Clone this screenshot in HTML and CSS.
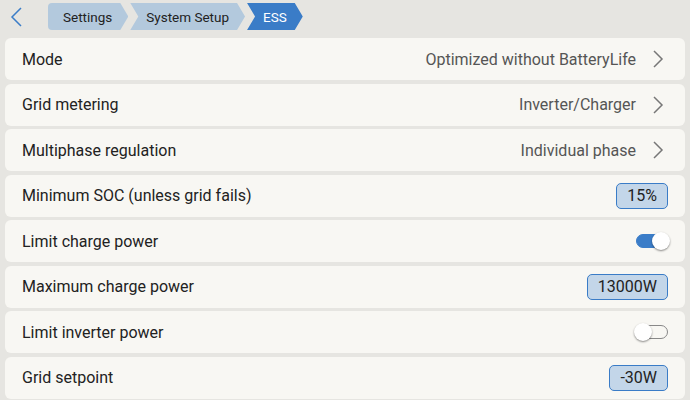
FILE: index.html
```html
<!DOCTYPE HTML>
<html lang="en">
<head>
	<title>ESS</title>
	<meta charset="utf-8">
	<meta name="viewport" content="width=device-width, initial-scale=1">
	<link rel="stylesheet" href="styles.css">
</head>
<body>
	<!-- breadcrumb bar -->
	<header class="topbar">
		<button class="back" aria-label="Back">
			<svg width="14" height="20" viewBox="0 0 14 20"><path d="M11 1 L2 10 L11 19" fill="none" stroke="#3b7dc8" stroke-width="1.5"/></svg>
		</button>
		<nav class="crumbs">
			<span class="crumb first">Settings</span>
			<span class="crumb">System Setup</span>
			<span class="crumb current">ESS</span>
		</nav>
	</header>

	<!-- settings list -->
	<main class="list">
		<div class="row">
			<span class="label">Mode</span>
			<span class="value">Optimized without BatteryLife</span>
			<svg class="chev" width="12" height="20" viewBox="0 0 12 20"><path d="M2 2 L10 10 L2 18" fill="none" stroke="#777" stroke-width="1.5"/></svg>
		</div>
		<div class="row">
			<span class="label">Grid metering</span>
			<span class="value">Inverter/Charger</span>
			<svg class="chev" width="12" height="20" viewBox="0 0 12 20"><path d="M2 2 L10 10 L2 18" fill="none" stroke="#777" stroke-width="1.5"/></svg>
		</div>
		<div class="row">
			<span class="label">Multiphase regulation</span>
			<span class="value">Individual phase</span>
			<svg class="chev" width="12" height="20" viewBox="0 0 12 20"><path d="M2 2 L10 10 L2 18" fill="none" stroke="#777" stroke-width="1.5"/></svg>
		</div>
		<div class="row">
			<span class="label">Minimum SOC (unless grid fails)</span>
			<span class="box">15%</span>
		</div>
		<div class="row">
			<span class="label">Limit charge power</span>
			<span class="switch on"><span class="knob"></span></span>
		</div>
		<div class="row">
			<span class="label">Maximum charge power</span>
			<span class="box">13000W</span>
		</div>
		<div class="row">
			<span class="label">Limit inverter power</span>
			<span class="switch"><span class="knob"></span></span>
		</div>
		<div class="row">
			<span class="label">Grid setpoint</span>
			<span class="box">-30W</span>
		</div>
	</main>
</body>
</html>
```

FILE: styles.css
```css
html, body {
	margin: 0;
	padding: 0;
}
body {
	background-color: #e6e5e1;
	font-family: Roboto, "Noto Sans", sans-serif;
	color: #222;
	width: 690px;
	height: 400px;
	overflow: hidden;
}

/* top bar */
.topbar {
	display: flex;
	align-items: center;
	height: 34px;
	padding-left: 10px;
}
.back {
	border: none;
	background: transparent;
	padding: 0;
	width: 38px;
	height: 24px;
	display: flex;
	align-items: center;
}
.crumbs {
	display: flex;
	gap: 2px;
	margin-top: -1px;
}
.crumb {
	display: flex;
	align-items: center;
	height: 27px;
	padding: 0 16px 0 16px;
	background-color: #b3c9dd;
	color: #222;
	font-size: 13.5px;
	clip-path: polygon(0 0, calc(100% - 8px) 0, 100% 50%, calc(100% - 8px) 100%, 0 100%, 8px 50%);
}
.crumb.first {
	padding-left: 15px;
	clip-path: polygon(0 0, calc(100% - 8px) 0, 100% 50%, calc(100% - 8px) 100%, 0 100%, 0 50%);
	border-radius: 4px 0 0 4px;
}
.crumb.current {
	background-color: #3a7cc7;
	color: #fff;
}

/* rows */
.list {
	display: flex;
	flex-direction: column;
	gap: 3.5px;
	padding: 4px 5px 0 5px;
}
.row {
	display: flex;
	align-items: center;
	height: 42px;
	background-color: #f8f7f3;
	border-radius: 6px;
	padding: 0 17px 0 17px;
	font-size: 16px;
}
.label {
	flex: 1;
}
.value {
	color: #555;
}
.chev {
	margin-left: 16px;
	margin-right: 4px;
}
.box {
	height: 24px;
	line-height: 24px;
	padding: 0 10px;
	background-color: #c3d6e9;
	border: 1.5px solid #3a7cc7;
	border-radius: 5px;
	font-size: 16px;
	color: #222;
}

/* toggle */
.switch {
	position: relative;
	width: 32px;
	height: 14px;
	border-radius: 7px;
	box-sizing: border-box;
	border: 1.5px solid #888;
	background-color: #f8f7f3;
	margin-right: 0;
}
.switch.on {
	background-color: #3b7dc8;
	border-color: #3b7dc8;
}
.knob {
	position: absolute;
	top: -3.5px;
	left: -3px;
	width: 18px;
	height: 18px;
	border-radius: 50%;
	background-color: #fff;
	box-shadow: 0 1px 2px rgba(0, 0, 0, 0.45);
}
.switch.on .knob {
	left: auto;
	right: -3px;
}
```
